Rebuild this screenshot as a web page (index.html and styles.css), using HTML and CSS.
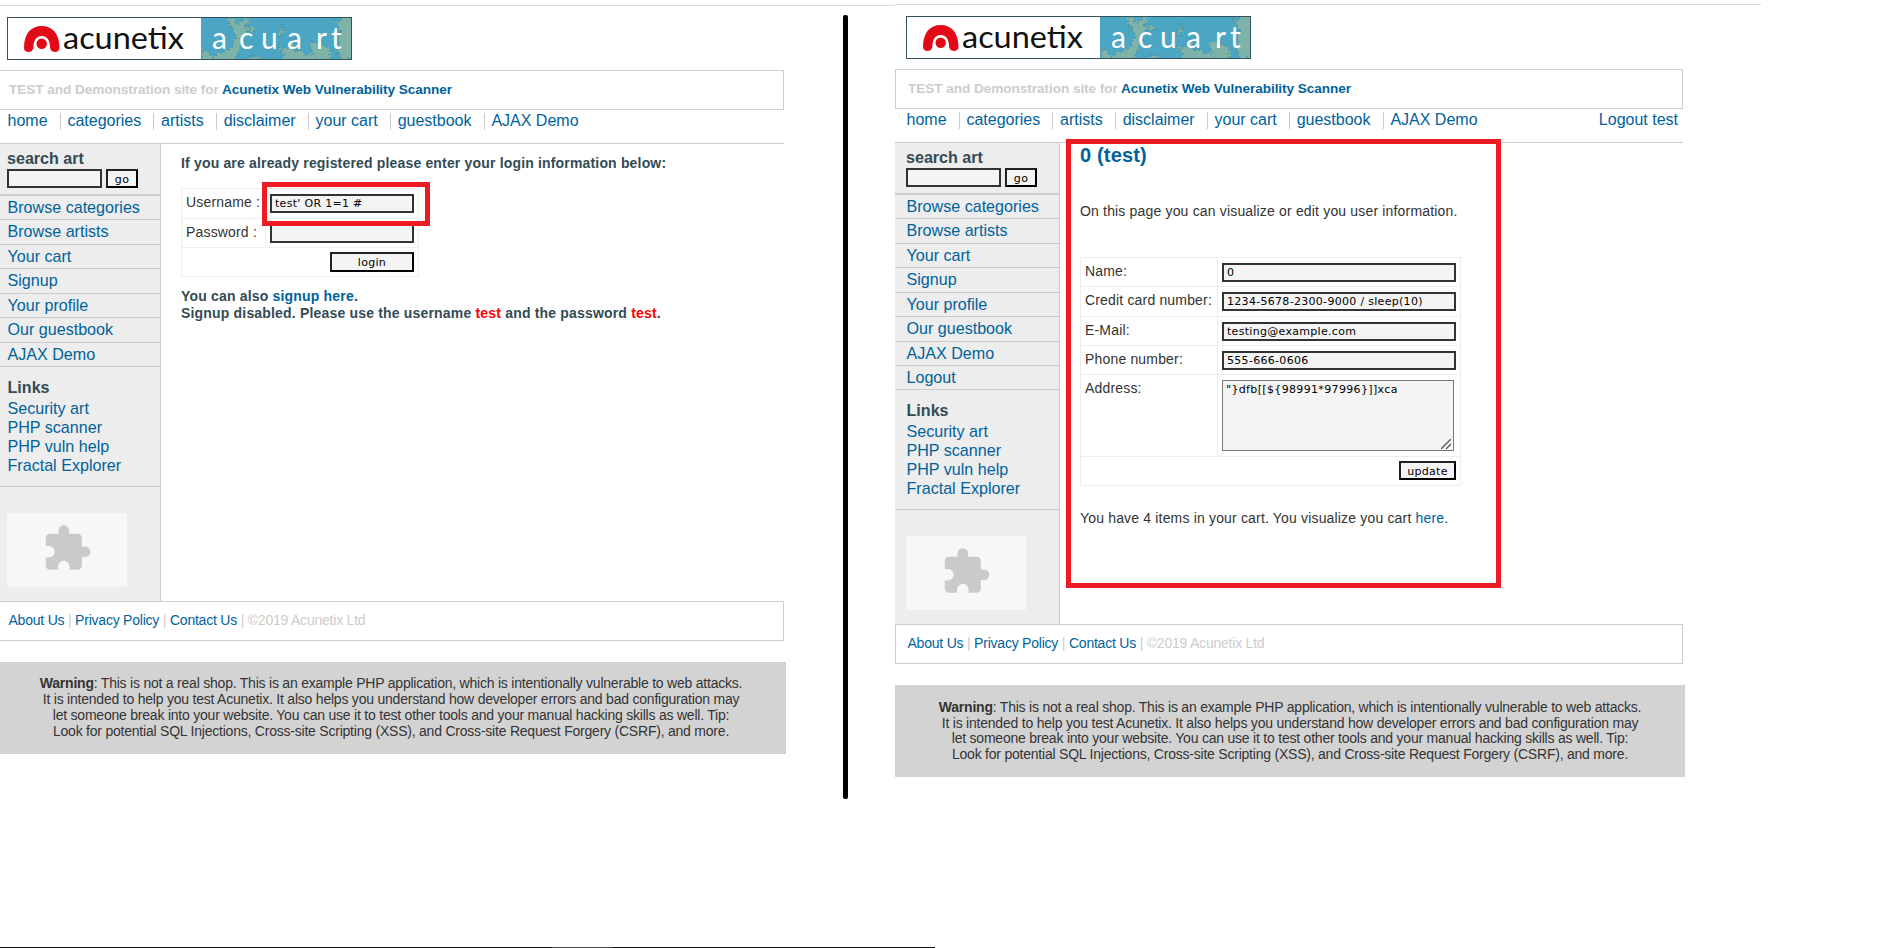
FILE: index.html
```
<!DOCTYPE html>
<html lang="en">
<head>
<meta charset="utf-8">
<title>Acunetix acuart</title>
<link rel="stylesheet" href="styles.css">
</head>
<body>
<svg width="0" height="0" class="defs">
  <defs>
    <filter id="rough" x="-10%" y="-10%" width="120%" height="120%">
      <feTurbulence type="fractalNoise" baseFrequency="0.3" numOctaves="3" seed="4"/>
      <feDisplacementMap in="SourceGraphic" scale="9" xChannelSelector="R" yChannelSelector="G"/>
      <feGaussianBlur stdDeviation=".35"/>
    </filter>
    <clipPath id="art"><rect x="194" y="1" width="150" height="41"/></clipPath>
    <symbol id="logo" viewBox="0 0 345 43">
      <rect x=".5" y=".5" width="344" height="42" fill="#fff" stroke="#33525b"/>
      <g clip-path="url(#art)">
        <rect x="194" y="1" width="150" height="41" fill="#4ba6c4"/>
        <g filter="url(#rough)" fill="#7fb3a8" stroke="#3f8fa8" stroke-width=".8">
          <path d="M218 0h8l5 7 8-7h5l-5 9 8 1 4 5-10-2-5 6-2 10-5 10-6 8h-28v-16l8 5 3 6 6-8 6 2 8-8 3-10z"/>
          <path d="M240 44l4-5 8 1 5 4zM271 16l5-8 1 7-4 5zM269 30l7 3 7-5 3-8 3 9-2 5 9-1 3 6 4-4 6 2 2 8h-37l3-6z"/>
          <path d="M303 24l6 2 4-4 3 6 8 5v11h-16l1-6-4-3zM325 0l6 5 4-6h12v44h-12l-4-8 2-8-4-6 4-5-3-8z"/>
        </g>
      </g>
      <path d="M26.300 31.500C25 36.500 17 36 17 31 17 16.500 24 9 34.700 9S52.500 16.500 52.500 31c0 5-8 5.500-9.300.5C43 23 40 19 34.700 19S26.500 23 26.300 31.500z" fill="#e30a17"/>
      <circle cx="34.700" cy="26.800" r="5.200" fill="#e30a17"/>
      <text class="word" x="56" y="32" textLength="121" lengthAdjust="spacingAndGlyphs">acunetix</text>
      <text class="word art" x="205 232 254 280 309 324" y="32">acuart</text>
    </symbol>
    <symbol id="piece" viewBox="0 0 24 24">
      <path d="M20.500 11H19V7c0-1.100-.9-2-2-2h-4V3.500a2.500 2.500 0 0 0-5 0V5H4c-1.100 0-2 .9-2 2v3.800h1.500a2.700 2.700 0 0 1 0 5.400H2V20c0 1.100.9 2 2 2h3.800v-1.500a2.700 2.700 0 0 1 5.400 0V22H17c1.100 0 2-.9 2-2v-4h1.500a2.500 2.500 0 0 0 0-5z" fill="#cacaca"/>
    </symbol>
  </defs>
</svg>
<div class="stage">
  <div class="panel left">
    <header class="top"><svg class="logo"><use href="#logo"/></svg></header>
    <div class="site">TEST and Demonstration site for <a>Acunetix Web Vulnerability Scanner</a></div>
    <nav class="nav"><a>home</a><a>categories</a><a>artists</a><a>disclaimer</a><a>your cart</a><a>guestbook</a><a>AJAX Demo</a></nav>
    <div class="main">
      <aside class="side">
        <div class="search"><b>search art</b><div class="row"><span class="field"></span><span class="btn">go</span></div></div>
        <ul class="menu"><li>Browse categories</li><li>Browse artists</li><li>Your cart</li><li>Signup</li><li>Your profile</li><li>Our guestbook</li><li>AJAX Demo</li></ul>
        <div class="links"><b>Links</b><a>Security art</a><a>PHP scanner</a><a>PHP vuln help</a><a>Fractal Explorer</a></div>
        <div class="ad"><svg><use href="#piece"/></svg></div>
      </aside>
      <section class="content">
        <p class="lead">If you are already registered please enter your login information below:</p>
        <div class="form login">
          <div class="cell">Username :</div><div class="cell"><span class="field">test' OR 1=1 #</span></div>
          <div class="cell">Password :</div><div class="cell"><span class="field"></span></div>
          <div class="cell wide"><span class="btn">login</span></div>
          <div class="mark"></div>
        </div>
        <p class="note">You can also <a>signup here</a>.<br>Signup disabled. Please use the username <em>test</em> and the password <em>test</em>.</p>
      </section>
    </div>
    <footer class="foot"><a>About Us</a> | <a>Privacy Policy</a> | <a>Contact Us</a> | ©2019 Acunetix Ltd</footer>
    <div class="warning"><p><b>Warning</b>: This is not a real shop. This is an example PHP application, which is intentionally vulnerable to web attacks.</p><p>It is intended to help you test Acunetix. It also helps you understand how developer errors and bad configuration may</p><p>let someone break into your website. You can use it to test other tools and your manual hacking skills as well. Tip:</p><p>Look for potential SQL Injections, Cross-site Scripting (XSS), and Cross-site Request Forgery (CSRF), and more.</p></div>
  </div>
  <div class="divider"></div>
  <div class="panel right">
    <header class="top"><svg class="logo"><use href="#logo"/></svg></header>
    <div class="site">TEST and Demonstration site for <a>Acunetix Web Vulnerability Scanner</a></div>
    <nav class="nav"><a>home</a><a>categories</a><a>artists</a><a>disclaimer</a><a>your cart</a><a>guestbook</a><a>AJAX Demo</a><a class="out">Logout test</a></nav>
    <div class="main">
      <aside class="side">
        <div class="search"><b>search art</b><div class="row"><span class="field"></span><span class="btn">go</span></div></div>
        <ul class="menu"><li>Browse categories</li><li>Browse artists</li><li>Your cart</li><li>Signup</li><li>Your profile</li><li>Our guestbook</li><li>AJAX Demo</li><li>Logout</li></ul>
        <div class="links"><b>Links</b><a>Security art</a><a>PHP scanner</a><a>PHP vuln help</a><a>Fractal Explorer</a></div>
        <div class="ad"><svg><use href="#piece"/></svg></div>
      </aside>
      <section class="content">
        <h2>0 (test)</h2>
        <p class="intro">On this page you can visualize or edit you user information.</p>
        <div class="form profile">
          <div class="cell">Name:</div><div class="cell"><span class="field">0</span></div>
          <div class="cell">Credit card number:</div><div class="cell"><span class="field">1234-5678-2300-9000 / sleep(10)</span></div>
          <div class="cell">E-Mail:</div><div class="cell"><span class="field">testing@example.com</span></div>
          <div class="cell">Phone number:</div><div class="cell"><span class="field">555-666-0606</span></div>
          <div class="cell">Address:</div><div class="cell"><span class="area">"}dfb[[${98991*97996}]]xca<svg viewBox="0 0 10 10"><path d="M0 10L10 0M5 10l5-5" stroke="#555" stroke-width="1.300"/></svg></span></div>
          <div class="cell wide"><span class="btn">update</span></div>
        </div>
        <p class="cart">You have 4 items in your cart. You visualize you cart <a>here</a>.</p>
        <div class="mark"></div>
      </section>
    </div>
    <footer class="foot"><a>About Us</a> | <a>Privacy Policy</a> | <a>Contact Us</a> | ©2019 Acunetix Ltd</footer>
    <div class="warning"><p><b>Warning</b>: This is not a real shop. This is an example PHP application, which is intentionally vulnerable to web attacks.</p><p>It is intended to help you test Acunetix. It also helps you understand how developer errors and bad configuration may</p><p>let someone break into your website. You can use it to test other tools and your manual hacking skills as well. Tip:</p><p>Look for potential SQL Injections, Cross-site Scripting (XSS), and Cross-site Request Forgery (CSRF), and more.</p></div>
  </div>
  <div class="taskbar"></div>
</div>
</body>
</html>
```
FILE: styles.css
```
* { box-sizing: border-box; }
body { margin: 0; background: #fff; font-family: "Liberation Sans", Arial, sans-serif; color: #333; overflow: hidden; }
p, ul, h2 { margin: 0; padding: 0; }
a { color: #00629b; }
.defs { position: absolute; }
.stage { position: relative; display: flex; width: 1890px; height: 948px; overflow: hidden; align-items: flex-start; }
.panel { border-top: 1px solid #dadada; flex: none; white-space: nowrap; }
.left { width: 899px; margin: 5px 0 0 -4px; }
.right { width: 866px; margin-top: 4px; }
.divider { position: absolute; left: 843px; top: 15px; width: 5px; height: 784px; border-radius: 2px; background: #000; }
.taskbar { position: absolute; left: 0; bottom: 0; width: 935px; height: 1px; background: linear-gradient(90deg, #111 552px, #444 552px 613px, #111 613px); }
.top { padding: 11px 0 0 11px; height: 64px; }
.logo { display: block; width: 345px; height: 43px; }
.word { font-family: Lato, sans-serif; font-size: 31px; fill: #111; }
.art { font-size: 30px; fill: #fff; }
.site { width: 788px; height: 40px; border: 1px solid #ccc; padding: 0 12px; line-height: 38px; font-size: 13.600px; letter-spacing: -.055px; font-weight: bold; color: #ccc; }
.nav { width: 788px; height: 33px; display: flex; padding: 3px 0 0 11.500px; font-size: 16px; line-height: 16px; }
.nav a { height: 17px; padding-right: 12.200px; }
.nav a + a { padding-left: 6.700px; border-left: 1px solid #ccc; }
.nav a.out { margin-left: auto; border: 0; padding-right: 5px; }
.main { width: 788px; border-top: 1px solid #ccc; display: flex; }
.side { width: 165px; background: #ededed; border-right: 1px solid #ccc; font-size: 16.100px; flex: none; }
.search { height: 52px; border-bottom: 2px solid #ccc; padding: 5px 0 0 11px; line-height: 19px; color: #334b54; }
.search b, .links b { color: #334b54; display: block; }
.row { display: flex; gap: 4px; margin-top: 1px; }
.field, .btn { display: block; background: #f4f4f4; border: 2px solid #333; height: 19px; font: 11px/16px "DejaVu Sans", Verdana, sans-serif; letter-spacing: .3px; color: #000; padding-left: 3px; }
.btn { border-color: #222 #000 #000 #222; padding: 0; text-align: center; line-height: 17px; }
.row .field { width: 95px; }
.row .btn { width: 32px; }
.menu { list-style: none; }
.menu li { color: #00629b; height: 24.430px; border-bottom: 1px solid #ccc; padding-left: 11.500px; line-height: 23px; }
.links { height: 120px; border-bottom: 1px solid #ccc; padding: 10px 0 0 11.500px; line-height: 19px; }
.links b { line-height: 21px; }
.links a { display: block; position: relative; top: 1px; }
.ad { height: 114px; padding: 26px 0 0 11px; }
.ad svg { display: block; width: 120px; height: 74px; background: #f7f7f7; padding: 10px 34px 13px 34px; }
.content { position: relative; flex: 1; padding-left: 20px; font-size: 14px; letter-spacing: .17px; }
.lead { font-weight: bold; line-height: 17px; padding-top: 11px; color: #334b54; }
.form { display: grid; position: relative; border: solid #ededed; border-width: 1px 0 0 1px; }
.cell { border: solid #ededed; border-width: 0 1px 1px 0; padding: 5px 4px 0; line-height: 16px; }
.cell .field { width: 100%; }
.wide { grid-column: 1 / 3; padding-top: 4px; }
.wide .btn { margin-left: auto; }
.login { width: 238px; grid-template-columns: 84px 153px; grid-template-rows: 30px 29px 29px; margin-top: 16px; }
.login .btn { width: 84px; height: 20px; }
.mark { position: absolute; border: 5px solid #ed1c24; }
.login .mark { left: 80px; top: -7px; width: 168px; height: 44px; }
.note { font-weight: bold; line-height: 17px; color: #334b54; margin-top: 11px; letter-spacing: .18px; }
.note em { font-style: normal; color: #f00; }
h2 { font-size: 20px; line-height: 24px; color: #00629b; }
.intro { line-height: 17px; margin-top: 36px; }
.profile { width: 381px; grid-template-columns: 137px 243px; grid-template-rows: 29px 30px 29px 29px 82px 29px; margin-top: 37px; }
.area { position: relative; display: block; width: 232px; height: 71px; background: #f4f4f4; border: 1px solid #777; font: 11px/16px "DejaVu Sans", Verdana, sans-serif; letter-spacing: .35px; color: #000; padding: 1px 3px; }
.area svg { position: absolute; right: 2px; bottom: 1px; width: 10px; height: 10px; }
.profile .btn { width: 57px; }
.cart { line-height: 17px; margin-top: 24px; }
.right .mark { left: 6px; top: -4px; width: 435px; height: 449px; }
.foot { width: 788px; height: 40px; border: 1px solid #ccc; padding: 0 11.500px; line-height: 37px; font-size: 14px; color: #ccc; letter-spacing: -.22px; }
.warning { width: 790px; height: 92px; margin-top: 21px; background: #d3d3d3; text-align: center; font-size: 14px; line-height: 15.700px; letter-spacing: -.22px; padding-top: 14.500px; }
```
